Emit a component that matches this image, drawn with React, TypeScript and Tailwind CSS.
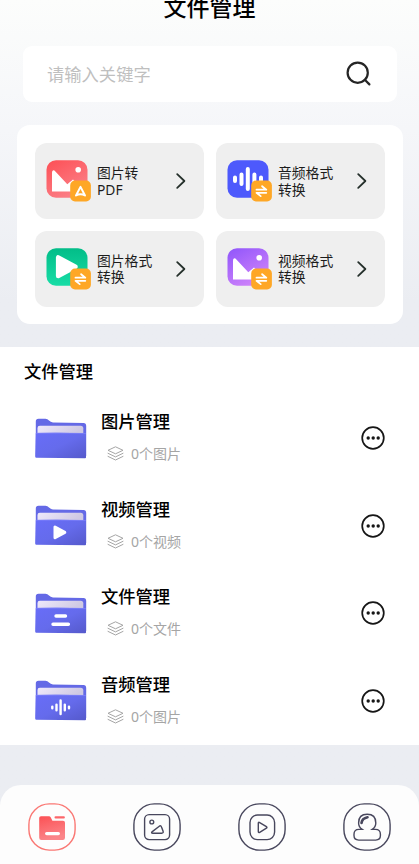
import type { ReactNode } from 'react';

type BadgeKind = 'pdf' | 'swap';
type FolderKind = 'image' | 'video' | 'file' | 'audio';

const TOOLS: { id: string; lines: string[]; badge: BadgeKind; icon: ReactNode }[] = [
  { id: 'pdf', lines: ['图片转', 'PDF'], badge: 'pdf', icon: <PictureArt id="red" from="#fd4f55" to="#fb8088" /> },
  { id: 'audio', lines: ['音频格式', '转换'], badge: 'swap', icon: <AudioArt /> },
  { id: 'image', lines: ['图片格式', '转换'], badge: 'swap', icon: <PlayArt /> },
  { id: 'video', lines: ['视频格式', '转换'], badge: 'swap', icon: <PictureArt id="purple" from="#8f55fb" to="#cf83fa" /> },
];

const FOLDERS: { kind: FolderKind; title: string; count: string }[] = [
  { kind: 'image', title: '图片管理', count: '0个图片' },
  { kind: 'video', title: '视频管理', count: '0个视频' },
  { kind: 'file', title: '文件管理', count: '0个文件' },
  { kind: 'audio', title: '音频管理', count: '0个图片' },
];

function PictureArt({ id, from, to }: { id: string; from: string; to: string }) {
  return (
    <g>
      <defs>
        <linearGradient id={id} x1="0" y1="0" x2="0.6" y2="1">
          <stop offset="0" stopColor={from} />
          <stop offset="1" stopColor={to} />
        </linearGradient>
      </defs>
      <rect x="0.5" y="0.3" width="41" height="37.4" rx="9.5" fill={`url(#${id})`} />
      <path d="M6 13c0-3 1.8-3.3 3.4-1.6L21.3 24.2 27 19.6l5 5V31.5H6z" fill="#fff" />
      <circle cx="32.2" cy="9.8" r="2.8" fill="#fff" />
    </g>
  );
}

function AudioArt() {
  return (
    <g>
      <rect x="0.5" y="0.3" width="41" height="37.4" rx="9.5" fill="#4d59fc" />
      <path
        d="M8 17.5v3.5M14.5 14.5v9.5M20.8 9v20M27.4 14.5v9.5M34 17.5v3.5"
        stroke="#fff"
        strokeWidth="4"
        strokeLinecap="round"
      />
    </g>
  );
}

function PlayArt() {
  return (
    <g>
      <defs>
        <linearGradient id="green" x1="0" y1="0" x2="0" y2="1">
          <stop offset="0" stopColor="#02bd88" />
          <stop offset="1" stopColor="#18dda6" />
        </linearGradient>
      </defs>
      <rect x="0.5" y="0.3" width="41" height="37.4" rx="9.5" fill="url(#green)" />
      <path d="M12.2 9.5v18.5L29.5 18.7z" fill="#fff" stroke="#fff" strokeWidth="4.6" strokeLinejoin="round" />
    </g>
  );
}

function Badge({ kind }: { kind: BadgeKind }) {
  return (
    <g>
      <rect x="24.2" y="20.6" width="20.7" height="20.9" rx="4.8" fill="#fea726" />
      {kind === 'pdf' ? (
        <path
          d="M34.5 26.9l-4.5 8.6q4.5-2.6 9 0z"
          fill="none"
          stroke="#fff"
          strokeWidth="2"
          strokeLinejoin="round"
        />
      ) : (
        <path
          d="M29.5 29.7h9.8l-4.2-3.5M39.3 32.8h-9.8l4.2 3.3"
          fill="none"
          stroke="#fff"
          strokeWidth="1.8"
          strokeLinecap="round"
          strokeLinejoin="round"
        />
      )}
    </g>
  );
}

function FolderIcon({ kind }: { kind: FolderKind }) {
  return (
    <svg width="52" height="41" viewBox="0 0 52 41">
      <defs>
        <linearGradient id={`front-${kind}`} x1="0" y1="0" x2="1" y2="1">
          <stop offset="0" stopColor="#686df8" />
          <stop offset="0.5" stopColor="#656bec" />
          <stop offset="1" stopColor="#5559cb" />
        </linearGradient>
        <linearGradient id={`paper-${kind}`} x1="0" y1="0" x2="1" y2="0.2">
          <stop offset="0" stopColor="#efe9fb" />
          <stop offset="1" stopColor="#cfc9e3" />
        </linearGradient>
      </defs>
      <path d="M0.8 3.5Q0.8 0.8 3.5 0.8H10.5Q12.5 0.8 14 2.5T18 4.4L48.5 5Q51.2 5 51.2 8V38H0.8z" fill="#6469e6" />
      <path d="M2.5 15.5V10Q2.5 7.7 4.8 7.7H45.7Q48.3 7.7 48.3 10.3V15.5z" fill={`url(#paper-${kind})`} />
      <path d="M0.8 15Q25 14.6 51 15.2V39.5Q51 40.3 50 40.3L1 39.8Q0.2 39.6 0.2 38.6z" fill={`url(#front-${kind})`} />
      <path d="M1 15.3Q25 14.9 50.8 15.5" fill="none" stroke="#7c80fa" strokeWidth="0.8" />
      {kind === 'video' && (
        <path d="M20 22v10.8L29.8 27.4z" fill="#fff" stroke="#fff" strokeWidth="3" strokeLinejoin="round" />
      )}
      {kind === 'file' && (
        <path d="M21 23h9.5M18 31.2h15.4" stroke="#fff" strokeWidth="3.4" strokeLinecap="round" />
      )}
      {kind === 'audio' && (
        <path
          d="M17.3 26.6v1.6M21.5 24.6v5.6M25.6 20.4v13.6M29.8 24.6v5.6M34 26.6v1.6"
          stroke="#fff"
          strokeWidth="2.4"
          strokeLinecap="round"
        />
      )}
    </svg>
  );
}

function LayersIcon() {
  return (
    <svg width="17" height="15" viewBox="0 0 17 15" fill="none" stroke="#a5a5a5" strokeWidth="1" strokeLinejoin="round">
      <path d="M8.5 0.8L16 4.3 8.5 7.8 1 4.3z" />
      <path d="M1 7.3l7.5 3.6L16 7.3M1 10.4L8.5 14 16 10.4" strokeLinecap="round" />
    </svg>
  );
}

function NavIcon({ active, children }: { active?: boolean; children: ReactNode }) {
  const color = active ? '#fa7773' : '#48475d';
  return (
    <button type="button" className="flex justify-center">
      <svg width="48" height="48" viewBox="0 0 48 48" fill="none" stroke={color} strokeWidth="1.4">
        <rect x="0.9" y="0.9" width="46.2" height="46.2" rx="20.5" />
        {children}
      </svg>
    </button>
  );
}

export default function App() {
  return (
    <div className="h-[864px] w-full overflow-hidden flex flex-col bg-linear-to-b from-[#fcfdfc] via-[#f5f6f9] via-15% to-[#ebedf2] to-35% font-['Noto_Sans','Noto_Sans_CJK_SC',sans-serif] text-black">
      {/* 标题 */}
      <h1 className="h-[46px] shrink-0 -mt-[9px] mb-[9px] text-center text-[23px] leading-[33px] font-medium">文件管理</h1>

      {/* 搜索 */}
      <div className="ml-[23px] mr-[22px] h-14 shrink-0 flex items-center justify-between rounded-[9px] bg-white pl-6 pr-[25px]">
        <span className="pt-px text-[17.3px] text-[#bfbfbf]">请输入关键字</span>
        <svg width="26" height="26" viewBox="0 0 26 26" fill="none" stroke="#252525" strokeWidth="2.2" strokeLinecap="round">
          <circle cx="11.7" cy="11.7" r="10.1" />
          <path d="M18.8 18.8l4.6 4.6" />
        </svg>
      </div>

      {/* 格式转换工具 */}
      <div className="ml-[17px] mr-4 mt-[23px] h-[199px] shrink-0 grid grid-cols-2 content-start gap-x-3 gap-y-[11.6px] rounded-[13px] bg-white p-[18px]">
        {TOOLS.map((t) => (
          <button key={t.id} type="button" className="h-[76px] flex items-center rounded-xl bg-[#efefef] pl-[11px] pr-[17px] text-left">
            <svg width="45" height="42" viewBox="0 0 45 42" className="shrink-0">
              {t.icon}
              <Badge kind={t.badge} />
            </svg>
            <span className="ml-1.5 flex-1 pt-[1.4px] text-[13.8px] leading-[16.5px] text-[#1c1c1c]">
              {t.lines.map((line) => (
                <span key={line} className="block whitespace-nowrap">{line}</span>
              ))}
            </span>
            <svg width="12" height="18" viewBox="0 0 12 18" fill="none" stroke="#25302b" strokeWidth="1.8" strokeLinecap="round" strokeLinejoin="round">
              <path d="M2.2 2.2L9.4 9l-7.2 6.8" />
            </svg>
          </button>
        ))}
      </div>

      {/* 文件夹列表 */}
      <section className="mt-[23px] h-[398px] shrink-0 bg-white">
        <h2 className="pl-6 pt-3 text-[17.3px] leading-[26px] font-medium">文件管理</h2>
        <ul className="mt-[9.4px]">
          {FOLDERS.map((f) => (
            <li key={f.kind} className="flex h-[87.6px] items-center pl-[35px] pr-[34px]">
              <FolderIcon kind={f.kind} />
              <div className="ml-3.5 flex-1">
                <p className="text-[17.3px] leading-[26px] font-medium">{f.title}</p>
                <div className="mt-2 mb-[2.4px] ml-1.5 flex items-center gap-[7px] text-sm leading-[22px] text-[#a5a5a5]">
                  <span className="pb-px">
                    <LayersIcon />
                  </span>
                  <span>{f.count}</span>
                </div>
              </div>
              <svg width="24" height="24" viewBox="0 0 24 24" fill="#161616">
                <circle cx="12" cy="12" r="10.8" fill="none" stroke="#161616" strokeWidth="1.7" />
                <circle cx="7.2" cy="12" r="1.7" />
                <circle cx="12.2" cy="12" r="1.7" />
                <circle cx="17.2" cy="12" r="1.7" />
              </svg>
            </li>
          ))}
        </ul>
      </section>

      {/* 底部导航 */}
      <nav className="mt-auto h-[79px] shrink-0 grid grid-cols-4 items-start rounded-t-[21px] bg-[#fdfdfd] pt-[18px]">
        <NavIcon active>
          <defs>
            <linearGradient id="nav-folder" x1="0" y1="0" x2="0.3" y2="1">
              <stop offset="0" stopColor="#fc5054" />
              <stop offset="1" stopColor="#fb8589" />
            </linearGradient>
          </defs>
          <path d="M11.2 15Q11.2 13.2 13 13.2H21Q22.1 13.2 22.8 14.5L24.4 17.7H35Q37 17.7 37 19.7V34.8Q37 37 34.8 37H13.4Q11.2 37 11.2 34.8z" fill="url(#nav-folder)" stroke="none" />
          <path d="M27.6 14.4h8.2" stroke="#fc666a" strokeWidth="2.2" strokeLinecap="round" />
          <path d="M18.7 30.6h11.6" stroke="#fff" strokeWidth="3.4" strokeLinecap="round" />
        </NavIcon>
        <NavIcon>
          <rect x="11.6" y="11.6" width="25" height="25" rx="4.5" />
          <circle cx="18.8" cy="19" r="1.9" />
          <path d="M19.3 28.6l7-5.4q1.6-1.1 2.2 0.7l1.6 4.3q0.6 2-1.4 2h-8.8q-2.3-0.1-0.6-1.6z" />
        </NavIcon>
        <NavIcon>
          <rect x="12" y="12" width="24.6" height="24.6" rx="7.5" />
          <path d="M20.3 20.3v8.2q0 1.5 1.4 0.8l6.7-4.1q1.1-0.8 0-1.6l-6.7-4q-1.4-0.8-1.4 0.7z" />
        </NavIcon>
        <NavIcon>
          <path d="M19.2 26.4h-3.3q-4.9 0-4.9 4.9v1.3q0 4.5 4.7 4.5h17q4.7 0 4.7-4.5v-1.3q0-4.9-4.9-4.9h-3.3q3.6-2.6 3.6-6.5 0-8.6-8.6-8.6t-8.6 8.6q0 3.9 3.6 6.5z" />
          <path d="M18.5 20q0.6-4.6 6-5.7" strokeWidth="2.6" strokeLinecap="round" />
        </NavIcon>
      </nav>
    </div>
  );
}
